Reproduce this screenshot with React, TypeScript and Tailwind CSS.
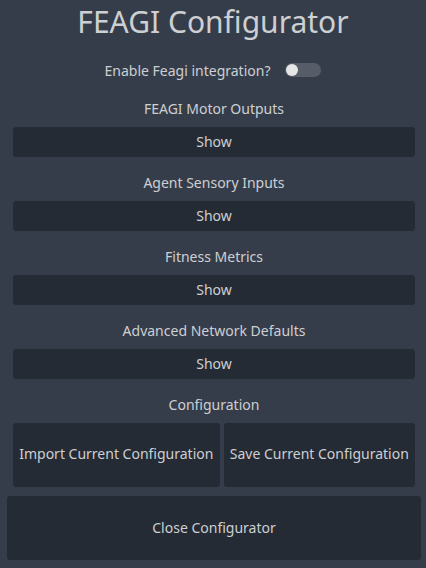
import { useState } from "react";

const sections = [
  "FEAGI Motor Outputs",
  "Agent Sensory Inputs",
  "Fitness Metrics",
  "Advanced Network Defaults",
];

export default function App() {
  const [enabled, setEnabled] = useState(false);

  return (
    <main
      className="w-[426px] h-[568px] bg-[#363d4a] text-[#cdcfd2] flex flex-col overflow-hidden"
      style={{ fontFamily: '"Noto Sans", "Open Sans", sans-serif' }}
    >
      <h1 className="h-[44px] text-[30px] leading-[44px] text-center">FEAGI Configurator</h1>

      {/* Toggle */}
      <div className="mt-[16px] h-[20px] flex items-center justify-center gap-[15px] text-[14px]">
        <span>Enable Feagi integration?</span>
        <button
          type="button"
          onClick={() => setEnabled(!enabled)}
          className="w-[36px] h-[14px] rounded-full bg-[#575d68] flex items-center px-[1px]"
          aria-label="Enable Feagi integration"
        >
          <span
            className={
              enabled
                ? "w-[12px] h-[12px] rounded-full bg-[#e6e6e6] ml-auto"
                : "w-[12px] h-[12px] rounded-full bg-[#e6e6e6]"
            }
          />
        </button>
      </div>

      {/* Sections */}
      <div className="mt-[19px] pl-[13px] pr-[11px] flex flex-col gap-[16px]">
        {sections.map((s) => (
          <div key={s} className="flex flex-col gap-[8px]">
            <div className="h-[20px] leading-[20px] text-[14px] text-center">{s}</div>
            <button type="button" className="h-[30px] rounded-[3px] bg-[#252b35] text-[14px] pb-[1px]">
              Show
            </button>
          </div>
        ))}

        <div className="flex flex-col gap-[8px]">
          <div className="h-[20px] leading-[20px] text-[14px] text-center">Configuration</div>
          <div className="flex gap-[4px] h-[64px]">
            <button
              type="button"
              className="flex-auto px-[6px] pb-[3px] rounded-[3px] bg-[#252b35] text-[14px] whitespace-nowrap"
            >
              Import Current Configuration
            </button>
            <button
              type="button"
              className="flex-auto px-[6px] pb-[3px] rounded-[3px] bg-[#252b35] text-[14px] whitespace-nowrap"
            >
              Save Current Configuration
            </button>
          </div>
        </div>
      </div>

      <div className="mt-[9px] pl-[7px] pr-[5px]">
        <button type="button" className="w-full h-[64px] rounded-[3px] bg-[#252b35] text-[14px] pb-[2px]">
          Close Configurator
        </button>
      </div>
    </main>
  );
}
